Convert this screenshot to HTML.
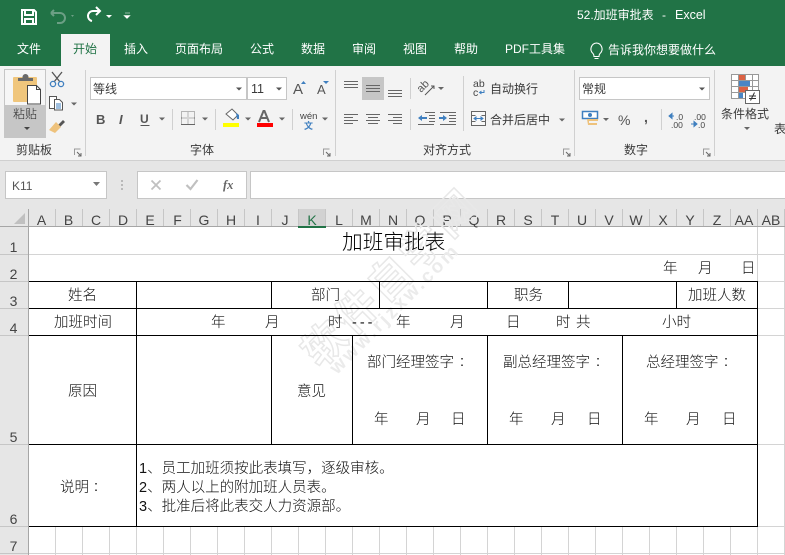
<!DOCTYPE html>
<html><head><meta charset="utf-8"><style>
html,body{margin:0;padding:0;background:#fff;width:785px;height:555px;overflow:hidden}
svg{display:block}
text{font-family:"Liberation Sans","Noto Sans CJK SC",sans-serif;white-space:pre}
.t{font-size:12px;fill:#fff}
.r{font-size:12px;fill:#3a3a3a}
.c{font-size:14.5px;fill:#111;font-weight:300}
.h{font-size:14px;fill:#444;text-anchor:middle}
.ln{stroke:#666;stroke-width:1;fill:none}
.bl{stroke:#000;stroke-width:1;fill:none}
.gr{stroke:#d4d4d4;stroke-width:1;fill:none}
.sp{stroke:#c6c6c6;stroke-width:1;fill:none}
</style></head><body>
<svg width="785" height="555" viewBox="0 0 785 555" xmlns="http://www.w3.org/2000/svg">
<!-- chrome -->
<rect width="785" height="555" fill="#fff"/>
<rect width="785" height="66" fill="#217346"/>
<rect x="61" y="34" width="49" height="32" fill="#f3f3f3"/>
<rect y="66" width="785" height="94" fill="#f3f3f3"/>
<rect y="160" width="785" height="67" fill="#e6e6e6"/>
<rect y="160" width="785" height="1" fill="#d0d0d0"/>
<!-- QAT -->
<path d="M22 10h12l2 2v12H22z M25 10v5h8v-5 M25 24v-5h8v5" fill="none" stroke="#fff" stroke-width="2"/>
<path d="M54 14l-3 -3M51 11l3-3h0M51 11h9a4.500 4.500 0 0 1 0 10h-3" transform="translate(0,2)" fill="none" stroke="#6c9f85" stroke-width="2"/>
<path d="M71 15l3 0-1.500 2z" fill="#6c9f85"/>
<path d="M99 11h-6a5 5 0 0 0 -5 5 5 5 0 0 0 4 5M96 7l4 4-4 4" fill="none" stroke="#fff" stroke-width="2"/>
<path d="M106 15h6l-3 3z" fill="#fff"/>
<path d="M125 13h5M124 15.500h6l-3 3z" fill="#fff" stroke="#fff" stroke-width=".6"/>
<text class="t" x="577" y="19">52.加班审批表</text>
<text class="t" x="662" y="19">-</text>
<text class="t" x="675" y="19" style="font-size:12.500px">Excel</text>
<!-- tabs -->
<text class="t" x="17" y="53">文件</text>
<text class="t" x="73" y="53" style="fill:#217346">开始</text>
<text class="t" x="124" y="53">插入</text>
<text class="t" x="175" y="53">页面布局</text>
<text class="t" x="250" y="53">公式</text>
<text class="t" x="301" y="53">数据</text>
<text class="t" x="352" y="53">审阅</text>
<text class="t" x="403" y="53">视图</text>
<text class="t" x="454" y="53">帮助</text>
<text class="t" x="505" y="53">PDF工具集</text>
<path d="M596.500 43a6 6 0 0 0 -3.500 10.500c1 1 1 2 1 3h5c0-1 0-2 1-3a6 6 0 0 0 -3.500-10.500zM594.500 58.500h4" fill="none" stroke="#fff" stroke-width="1.100"/>
<text class="t" x="608" y="54">告诉我你想要做什么</text>
<!-- group separators -->
<path d="M85.500 70v86M335.500 70v86M574.500 70v86M714.500 70v86" stroke="#d0d0d0" fill="none"/>
<path d="M172.500 109v21M215.500 109v21M292.500 109v21M410.500 78v21M410.500 109v21M463.500 76v55M661.500 109v21" stroke="#d0d0d0" fill="none"/>
<!-- paste -->
<rect x="4.500" y="69.500" width="41" height="36" fill="#f6f6f6" stroke="#c6c6c6"/>
<rect x="4" y="105" width="42" height="33" fill="#c6c6c6"/>
<rect x="13" y="77" width="24" height="25" rx="1" fill="#f0c67c"/>
<path d="M18 81v-3h4.500v-1a3 3 0 0 1 6 0v1H33v3z" fill="#6a6a6a"/>
<path d="M27.500 85.500h9l4 4v14.500h-13z" fill="#fff" stroke="#444"/>
<path d="M36.500 85.500v4h4" fill="none" stroke="#444"/>
<text class="r" x="13" y="118" style="font-size:12px;fill:#222;font-weight:300">粘贴</text>
<path d="M24 127h6l-3 3z" fill="#444"/>
<!-- cut copy brush -->
<path d="M52 72l8 10M62 72l-8 10" stroke="#555" stroke-width="1.300" fill="none"/>
<circle cx="53" cy="84" r="2.600" fill="none" stroke="#3f7fbf" stroke-width="1.300"/>
<circle cx="61" cy="84" r="2.600" fill="none" stroke="#3f7fbf" stroke-width="1.300"/>
<path d="M49.500 96.500h7v12h-7z" fill="#fff" stroke="#555"/>
<path d="M54.500 99.500h5l3 3v7.500h-8z" fill="#fff" stroke="#555"/>
<path d="M56 104h5M56 106h5M56 108h5" stroke="#3f7fbf"/>
<path d="M71 102.500h6l-3 3z" fill="#666"/>
<path d="M58 125l5-5 2 2-5 5z" fill="#555"/>
<path d="M56 122l5 5-6 6-6-3z" fill="#eec27c"/>
<!-- font boxes -->
<rect x="90.500" y="77.500" width="156" height="22" fill="#fff" stroke="#c6c6c6"/>
<rect x="247.500" y="77.500" width="39" height="22" fill="#fff" stroke="#c6c6c6"/>
<text class="r" x="93" y="93">等线</text>
<text class="r" x="251" y="93" style="font-size:12.500px">11</text>
<path d="M236 87.500h6l-3 3zM276 87.500h6l-3 3z" fill="#555"/>
<text x="293" y="94" style="font-size:15px;fill:#555">A</text>
<path d="M300.500 84h5l-2.500-3z" fill="#3f7fbf" transform="translate(.5,0)"/>
<text x="317" y="94" style="font-size:13px;fill:#555">A</text>
<path d="M323 81h6l-3 3z" fill="#3f7fbf"/>
<text x="96" y="124" style="font-size:13px;font-weight:bold;fill:#555">B</text>
<text x="119" y="124" style="font-size:13px;font-style:italic;font-weight:bold;fill:#555">I</text>
<text x="140" y="123" style="font-size:12px;font-weight:bold;fill:#555">U</text>
<path d="M140.500 125.500h9" stroke="#555"/>
<path d="M159 117.500h6l-3 3zM202 117.500h6l-3 3zM245 117.500h6l-3 3zM279 117.500h6l-3 3zM322 117.500h6l-3 3z" fill="#666"/>
<path d="M181.500 111.500h13v13h-13zM188 111.500v13M181.500 118h13" fill="none" stroke="#777" stroke-dasharray="1 1"/>
<path d="M181 124.500h14" stroke="#666"/>
<path d="M226 114l6-5 6 6-5 5z" fill="#fff" stroke="#666"/>
<path d="M236 113l3 2v4h-2z" fill="#3f7fbf"/>
<rect x="223" y="123" width="16" height="4" fill="#ffff00"/>
<path d="M259 122l4.500-11h1l4.500 11M261 118h7" stroke="#666" stroke-width="2" fill="none"/>
<rect x="257" y="123" width="16" height="4" fill="#ff0000"/>
<text x="300" y="119" style="font-size:9.500px;fill:#444">wén</text>
<text x="304" y="129" style="font-size:9px;fill:#3f7fbf;font-weight:bold">文</text>
<text class="r" x="16" y="154">剪贴板</text>
<text class="r" x="190" y="154">字体</text>
<text class="r" x="423" y="154">对齐方式</text>
<text class="r" x="624" y="154">数字</text>
<path d="M74.500 155v-6h6M323.500 155v-6h6M563.500 155v-6h6M703.500 155v-6h6" fill="none" stroke="#999"/>
<path d="M77 152l4 4M81 153v3h-3M326 152l4 4M330 153v3h-3M566 152l4 4M570 153v3h-3M706 152l4 4M710 153v3h-3" fill="none" stroke="#666"/>
<!-- alignment -->
<rect x="362" y="77" width="22" height="23" fill="#c6c6c6"/>
<path class="ln" d="M344 81.500h14M344 84.500h14M344 87.500h14"/>
<path class="ln" d="M366 85.500h14M366 88.500h14M366 91.500h14"/>
<path class="ln" d="M388 90.500h14M388 93.500h14M388 96.500h14"/>
<path class="ln" d="M344 114.500h14M344 117.500h9M344 120.500h14M344 123.500h9"/>
<path class="ln" d="M366 114.500h14M368 117.500h10M366 120.500h14M368 123.500h10"/>
<path class="ln" d="M388 114.500h14M393 117.500h9M388 120.500h14M393 123.500h9"/>
<text x="0" y="0" transform="translate(421,93) rotate(-45)" style="font-size:11px;fill:#555">ab</text>
<path d="M425 95l9-9M431 86h3v3" fill="none" stroke="#555"/>
<path d="M438 87h6l-3 3z" fill="#666"/>
<path class="ln" d="M425 112.500h10M429 115.500h6M429 118.500h6M429 121.500h6M418 124.500h16"/>
<path d="M418 118l4-3v2h5v2h-5v2z" fill="#3f7fbf"/>
<path class="ln" d="M440 112.500h16M449 115.500h7M449 118.500h7M449 121.500h7M440 124.500h16"/>
<path d="M447 118l-4-3v2h-4v2h4v2z" fill="#3f7fbf"/>
<text x="473" y="87" style="font-size:10.500px;fill:#444">ab</text>
<text x="473" y="96" style="font-size:10.500px;fill:#444">c</text>
<path d="M484 90v2.500h-4M481.500 91l-2 1.500 2 1.500" fill="none" stroke="#3f7fbf"/>
<text class="r" x="490" y="93">自动换行</text>
<path d="M471.500 111.500h14v14h-14zM471.500 115.500h4M481.500 115.500h4M471.500 121.500h4M481.500 121.500h4" fill="#f8f8f8" stroke="#666"/>
<path d="M474 118.500h9M474 118.500l2-1.500v3zM483 118.500l-2-1.500v3z" stroke="#3f7fbf" fill="#3f7fbf"/>
<text class="r" x="490" y="124">合并后居中</text>
<path d="M559 118.500h6l-3 3z" fill="#666"/>
<!-- number -->
<rect x="579.500" y="77.500" width="130" height="22" fill="#fff" stroke="#c6c6c6"/>
<text class="r" x="582" y="93">常规</text>
<path d="M699 87.500h6l-3 3z" fill="#555"/>
<rect x="582.500" y="111.500" width="15" height="7" fill="#fff" stroke="#3f7fbf" stroke-width="1.500"/>
<circle cx="590" cy="115" r="2" fill="#3f7fbf"/>
<path d="M587 119h11v2h-9v2h8v2h-9z" fill="#eec27c"/>
<path d="M603 118h6l-3 3z" fill="#666"/>
<text x="618" y="125" style="font-size:14px;fill:#555">%</text>
<text x="644" y="122" style="font-size:14px;font-weight:bold;fill:#555">,</text>
<text x="676" y="120" style="font-size:8.500px;fill:#444">.0</text>
<text x="671" y="128" style="font-size:8.500px;fill:#444">.00</text>
<path d="M669 116h5M669 116l3-2.500v5z" stroke="#3f7fbf" fill="#3f7fbf"/>
<text x="694" y="120" style="font-size:8.500px;fill:#444">.00</text>
<text x="698" y="128" style="font-size:8.500px;fill:#444">.0</text>
<path d="M691 124h6M697 124l-3-2.500v5z" stroke="#3f7fbf" fill="#3f7fbf"/>
<!-- cond fmt -->
<path d="M731.500 74.500h27v24h-27zM731.500 80.500h27M731.500 86.500h27M731.500 92.500h27M738.500 74.500v24M745.500 74.500v24M752.500 74.500v24" fill="#fff" stroke="#999"/>
<rect x="739" y="75" width="6" height="5" fill="#dc6244"/>
<rect x="739" y="81" width="11" height="5" fill="#4a86c5"/>
<rect x="739" y="87" width="9" height="5" fill="#dc6244"/>
<rect x="739" y="93" width="4" height="5" fill="#4a86c5"/>
<rect x="745.500" y="90.500" width="14" height="13" fill="#fff" stroke="#666"/>
<path d="M749 96h7M749 98.500h7M750.500 100.500l4-8" stroke="#333" fill="none"/>
<text class="r" x="721" y="118">条件格式</text>
<path d="M744 127h6l-3 3z" fill="#666"/>
<text class="r" x="774" y="133">表</text>
<!-- formula bar -->
<rect x="5.500" y="171.500" width="101" height="27" fill="#fff" stroke="#c6c6c6"/>
<text x="12" y="190" style="font-size:12px;fill:#555">K11</text>
<path d="M93 182h7l-3.500 4z" fill="#777"/>
<path d="M122 180v2M122 184v2M122 188v2" stroke="#aaa" stroke-width="1.500"/>
<rect x="137.500" y="171.500" width="109" height="27" fill="#fff" stroke="#c6c6c6"/>
<path d="M151.500 180.500l9 9M160.500 180.500l-9 9" stroke="#c0c0c0" stroke-width="1.800" fill="none"/>
<path d="M186.500 185l4 4 7-9" stroke="#c0c0c0" stroke-width="2.200" fill="none"/>
<text x="223" y="189" style="font-family:'Liberation Serif',serif;font-size:12.500px;font-style:italic;font-weight:bold;fill:#666">fx</text>
<rect x="250.500" y="171.500" width="540" height="27" fill="#fff" stroke="#c6c6c6"/>
<!-- headers -->
<rect x="0" y="209" width="785" height="18" fill="#e6e6e6"/>
<rect x="0" y="227" width="28" height="328" fill="#e6e6e6"/>
<rect x="298" y="209" width="28" height="18" fill="#d2d2d2"/>
<path d="M25 213v11H14z" fill="#c0c0c0"/>
<path class="sp" d="M55.500 209v18M82.500 209v18M109.500 209v18M136.500 209v18M163.500 209v18M190.500 209v18M217.500 209v18M244.500 209v18M271.500 209v18M298.500 209v18M325.500 209v18M352.500 209v18M379.500 209v18M406.500 209v18M433.500 209v18M460.500 209v18M487.500 209v18M514.500 209v18M541.500 209v18M568.500 209v18M595.500 209v18M622.500 209v18M649.500 209v18M676.500 209v18M703.500 209v18M730.500 209v18M757.500 209v18M784.500 209v18"/>
<rect y="226" width="785" height="1" fill="#a6a6a6"/>
<rect x="28" y="209" width="1" height="346" fill="#a6a6a6"/>
<rect x="298" y="226" width="28" height="2" fill="#217346"/>
<path class="sp" d="M0 254.500h28M0 281.500h28M0 308.500h28M0 335.500h28M0 444.500h28M0 526.500h28M0 553.500h28"/>
<text class="h" x="41.500" y="225">A</text><text class="h" x="68.500" y="225">B</text><text class="h" x="96" y="225">C</text><text class="h" x="123" y="225">D</text><text class="h" x="150" y="225">E</text><text class="h" x="177.500" y="225">F</text><text class="h" x="204" y="225">G</text><text class="h" x="231" y="225">H</text><text class="h" x="258" y="225">I</text><text class="h" x="285" y="225">J</text><text class="h" x="312" y="225" style="fill:#217346">K</text><text class="h" x="339" y="225">L</text><text class="h" x="366" y="225">M</text><text class="h" x="393" y="225">N</text><text class="h" x="420" y="225">O</text><text class="h" x="447" y="225">P</text><text class="h" x="474" y="225">Q</text><text class="h" x="501" y="225">R</text><text class="h" x="528" y="225">S</text><text class="h" x="555" y="225">T</text><text class="h" x="582" y="225">U</text><text class="h" x="609" y="225">V</text><text class="h" x="636" y="225">W</text><text class="h" x="663" y="225">X</text><text class="h" x="690" y="225">Y</text><text class="h" x="717" y="225">Z</text><text class="h" x="744" y="225">AA</text><text class="h" x="771" y="225">AB</text>
<text class="h" x="13.500" y="252">1</text><text class="h" x="13.500" y="279">2</text><text class="h" x="13.500" y="306">3</text><text class="h" x="13.500" y="333">4</text><text class="h" x="13.500" y="442">5</text><text class="h" x="13.500" y="524">6</text><text class="h" x="13.500" y="551">7</text>
<!-- gridlines -->
<path class="gr" d="M29 254.500h756M757 281.500h28M757 308.500h28M757 335.500h28M757 444.500h28M757 526.500h28M29 553.500h756"/>
<path class="gr" d="M757.500 227v54M784.500 227v328M55.500 527v28M82.500 527v28M109.500 527v28M136.500 527v28M163.500 527v28M190.500 527v28M217.500 527v28M244.500 527v28M271.500 527v28M298.500 527v28M325.500 527v28M352.500 527v28M379.500 527v28M406.500 527v28M433.500 527v28M460.500 527v28M487.500 527v28M514.500 527v28M541.500 527v28M568.500 527v28M595.500 527v28M622.500 527v28M649.500 527v28M676.500 527v28M703.500 527v28M730.500 527v28M757.500 527v28"/>
<!-- watermark -->
<g transform="translate(320,369) rotate(-45)" fill="none" stroke="#e8e8e8" stroke-width="1.500">
<text x="0" y="0" style="font-size:42px;font-weight:bold;letter-spacing:4px">软件自学网</text>
</g>
<g transform="translate(337,375) rotate(-45)">
<text x="0" y="0" style="font-size:19px;font-weight:bold;fill:#ebebeb;letter-spacing:2.700px">www.rjzxw.com</text>
</g>
<!-- table -->
<path class="bl" d="M29 281.500h729M29 308.500h729M29 335.500h729M29 444.500h729M29 526.500h729"/>
<path class="bl" d="M136.500 281v246M757.500 281v246M271.500 281v28M271.500 335v110M352.500 335v110M379.500 281v28M487.500 281v28M487.500 335v110M568.500 281v28M622.500 335v110M676.500 281v28"/>
<!-- cell text -->
<text x="342" y="249" style="font-size:20.700px;fill:#000;font-weight:300">加班审批表</text>
<text class="c" x="663" y="273">年</text><text class="c" x="698" y="273">月</text><text class="c" x="741" y="273">日</text>
<text class="c" x="68" y="300">姓名</text><text class="c" x="311" y="300">部门</text><text class="c" x="514" y="300">职务</text><text class="c" x="688" y="300">加班人数</text>
<text class="c" x="54" y="327">加班时间</text><text class="c" x="211" y="327">年</text><text class="c" x="265" y="327">月</text><text class="c" x="328" y="327">时</text><text class="c" x="352" y="327" style="letter-spacing:3px">---</text><text class="c" x="396" y="327">年</text><text class="c" x="450" y="327">月</text><text class="c" x="506" y="327">日</text><text class="c" x="556" y="327">时</text><text class="c" x="576" y="327">共</text><text class="c" x="662" y="327">小时</text>
<text class="c" x="68" y="396">原因</text><text class="c" x="297" y="396">意见</text>
<text class="c" x="367" y="367">部门经理签字</text><text class="c" x="460" y="366">:</text>
<text class="c" x="503" y="367">副总经理签字</text><text class="c" x="596" y="366">:</text>
<text class="c" x="646" y="367">总经理签字</text><text class="c" x="724" y="366">:</text>
<text class="c" x="374" y="424">年</text><text class="c" x="416" y="424">月</text><text class="c" x="451" y="424">日</text>
<text class="c" x="509" y="424">年</text><text class="c" x="551" y="424">月</text><text class="c" x="587" y="424">日</text>
<text class="c" x="644" y="424">年</text><text class="c" x="686" y="424">月</text><text class="c" x="722" y="424">日</text>
<text class="c" x="60" y="492">说明</text><text class="c" x="94" y="491">:</text>
<text class="c" x="139" y="473">1、员工加班须按此表填写，逐级审核。</text>
<text class="c" x="139" y="492">2、两人以上的附加班人员表。</text>
<text class="c" x="139" y="511">3、批准后将此表交人力资源部。</text>
</svg>
</body></html>
